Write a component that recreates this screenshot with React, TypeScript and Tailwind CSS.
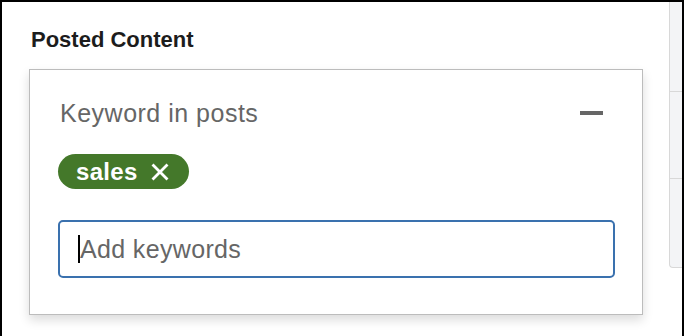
import React from "react";

const font = { fontFamily: '"Liberation Sans", Arial, sans-serif' };

const KeywordPill = ({ label }: { label: string }) => {
  return (
    <span className="inline-flex h-[35px] items-center gap-[13px] rounded-full bg-[#44782a] pl-[18px] pr-[20px] text-[24px] font-bold leading-none tracking-[0.3px] text-white">
      {label}
      <svg width="18" height="18" viewBox="0 0 18 18" aria-hidden="true">
        <path d="M2.5 2.5 L15.5 15.5 M15.5 2.5 L2.5 15.5" stroke="white" strokeWidth="2.8" strokeLinecap="square" />
      </svg>
    </span>
  );
};

export default function App() {
  return (
    <div className="flex h-[336px] w-[684px] border-x-2 border-t-2 border-black bg-white" style={font}>
      {/* Main column */}
      <div className="flex-1 pl-[27px] pt-[25px]">
        <h2 className="pl-[2px] text-[22px] font-bold leading-[26px] text-[#1c1c1c]">Posted Content</h2>

        {/* Filter card */}
        <div className="mt-[16px] w-[614px] border border-[#bcbcbc] bg-white pb-[36px] pl-[28px] pr-[27px] pt-[28px] shadow-[0_5px_10px_rgba(0,0,0,0.14)]">
          <div className="flex items-start justify-between pl-[2px]">
            <span className="text-[25px] leading-[30px] tracking-[0.5px] text-[#666666]">Keyword in posts</span>
            <span className="mr-[12px] mt-[13px] h-[4px] w-[23px] bg-[#666666]" />
          </div>

          <div className="mt-[26px] flex">
            <KeywordPill label="sales" />
          </div>

          <div className="mt-[31px] flex h-[58px] w-[557px] items-center rounded-[5px] border-2 border-[#3a71ae] pl-[18px]">
            <span className="h-[28px] w-[2px] bg-black" />
            <span className="text-[25px] leading-none tracking-[0.35px] text-[#666666]">Add keywords</span>
          </div>
        </div>
      </div>

      {/* Side rail */}
      <div className="w-[13px] shrink-0">
        <div className="flex h-[266px] flex-col rounded-bl-[4px] border-b border-l border-[#d8d8d8] bg-[#f3f4f6]">
          <div className="h-[90px] border-b border-[#d8d8d8]" />
          <div className="h-[87px] border-b border-[#d8d8d8]" />
          <div className="flex-1" />
        </div>
      </div>
    </div>
  );
}
